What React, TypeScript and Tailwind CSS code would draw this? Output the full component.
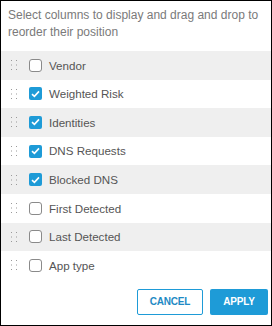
import React from "react";

const items: { label: string; checked: boolean }[] = [
  { label: "Vendor", checked: false },
  { label: "Weighted Risk", checked: true },
  { label: "Identities", checked: true },
  { label: "DNS Requests", checked: true },
  { label: "Blocked DNS", checked: true },
  { label: "First Detected", checked: false },
  { label: "Last Detected", checked: false },
  { label: "App type", checked: false },
];

function Handle() {
  return (
    <svg width="8" height="12" viewBox="0 0 8 12" className="shrink-0">
      {[1, 6].map((x) =>
        [1, 5.5, 10].map((y) => (
          <rect key={`${x}-${y}`} x={x} y={y} width="1" height="1" fill="#9a9a9a" />
        ))
      )}
    </svg>
  );
}

function Box({ checked }: { checked: boolean }) {
  if (checked) {
    return (
      <div className="w-[13px] h-[13px] rounded-[2px] bg-[#1e9bd7] flex items-center justify-center shrink-0">
        <svg width="9" height="8" viewBox="0 0 9 8">
          <path d="M1 4.2 L3.4 6.4 L8 1.4" stroke="white" strokeWidth="1.6" fill="none" />
        </svg>
      </div>
    );
  }
  return <div className="w-[13px] h-[13px] rounded-[3px] border border-[#8a8a8a] bg-white shrink-0" />;
}

export default function App() {
  return (
    <div
      className="w-[272px] h-[326px] border border-black bg-white flex flex-col"
      style={{ fontFamily: '"Liberation Sans", Arial, sans-serif' }}
    >
      <div className="px-[7px] pt-[6px] text-[12px] leading-[17px] text-[#7a7a7a] h-[50px]">
        Select columns to display and drag and drop to reorder their position
      </div>
      <div className="flex flex-col">
        {items.map((it, i) => (
          <div
            key={it.label}
            className={`h-[28.6px] flex items-center pl-[9px] ${i % 2 === 0 ? "bg-[#efefef]" : "bg-white"}`}
          >
            <Handle />
            <div className="ml-[11px]">
              <Box checked={it.checked} />
            </div>
            <span className="ml-[7px] text-[11.6px] text-[#555555]">{it.label}</span>
          </div>
        ))}
      </div>
      <div className="flex justify-end gap-[7px] pr-[3px] pt-[9px]">
        <button className="w-[66px] h-[26px] rounded-[2px] border border-[#1e9bd7] text-[#1e8ac4] text-[10px] tracking-[-0.2px] font-bold">
          CANCEL
        </button>
        <button className="w-[58px] h-[26px] rounded-[2px] bg-[#1e9bd7] text-white text-[10px] tracking-[-0.2px] font-bold">
          APPLY
        </button>
      </div>
    </div>
  );
}
